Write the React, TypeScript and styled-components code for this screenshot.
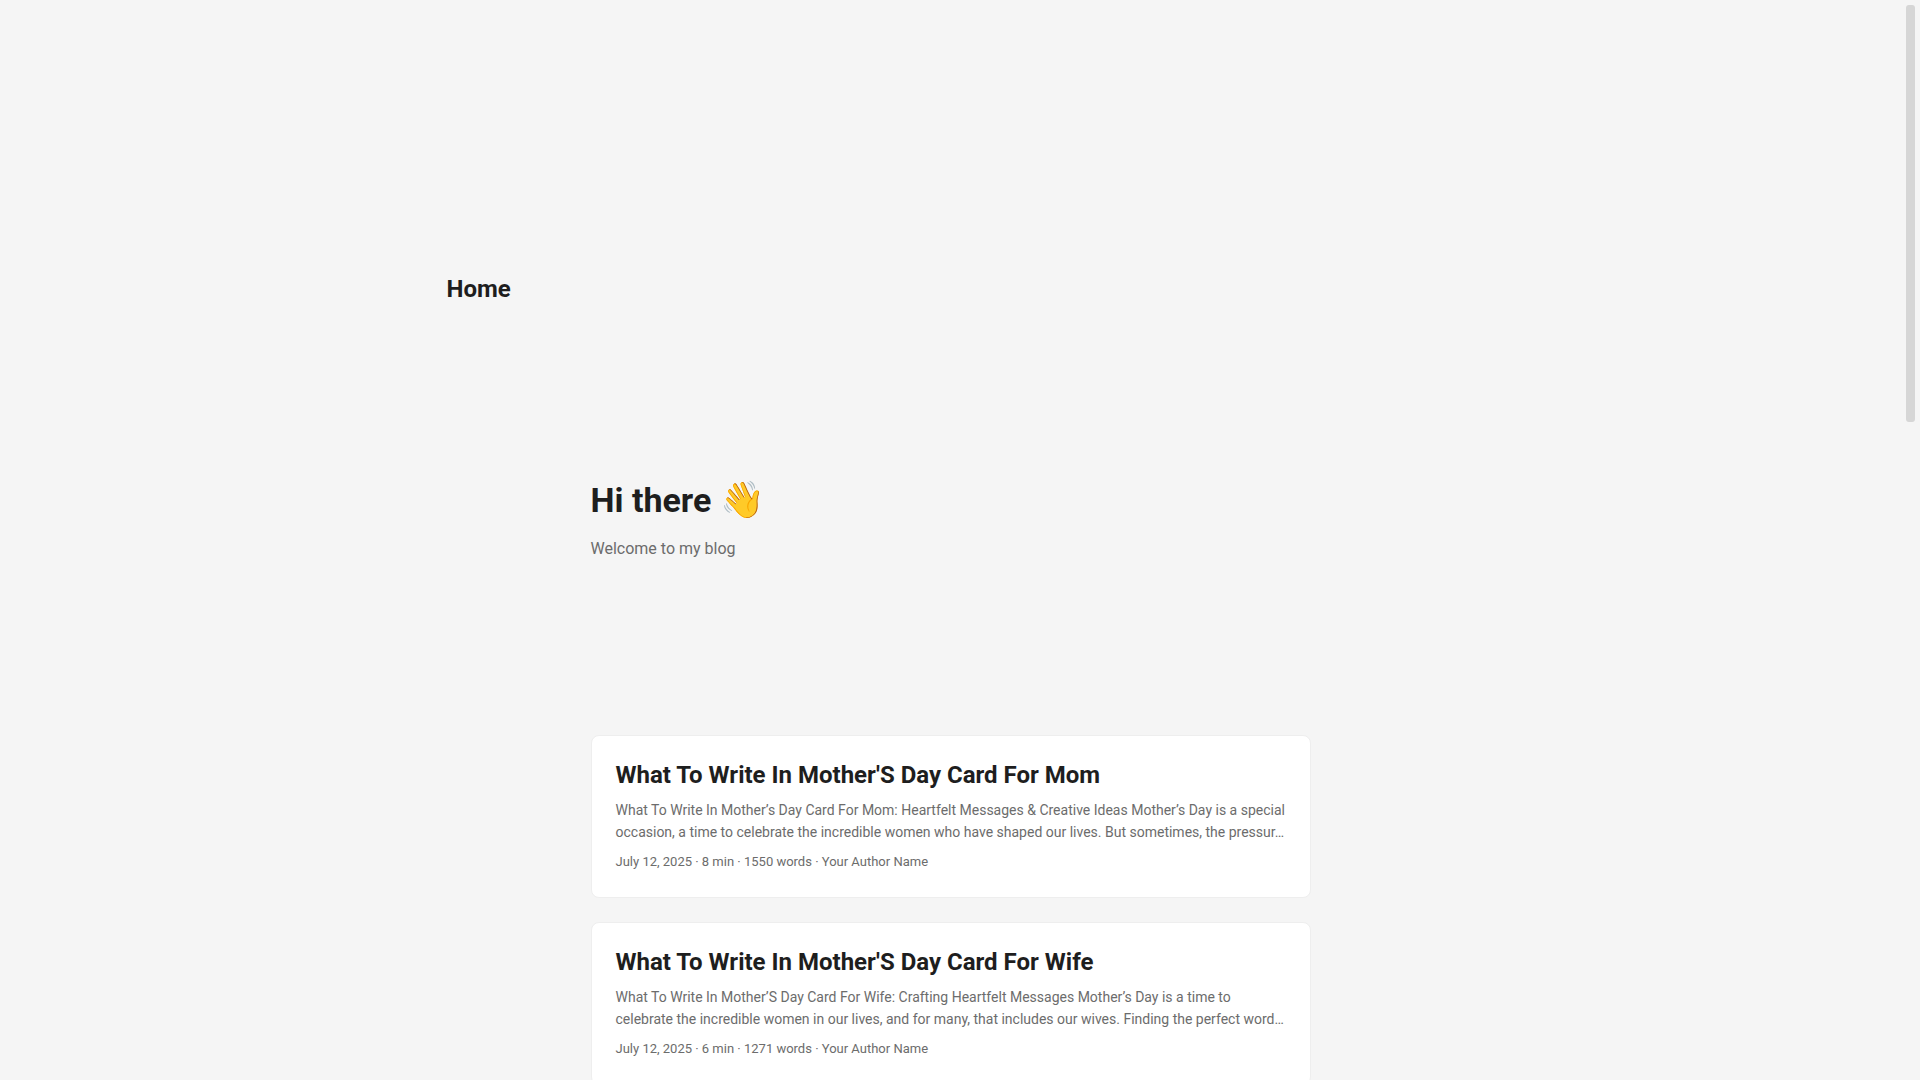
import React from "react";
import styled, { createGlobalStyle } from "styled-components";

const Global = createGlobalStyle`
  * { box-sizing: border-box; margin: 0; padding: 0; }
  body {
    background: #f5f5f5;
    color: #1e1e1e;
    font-family: Roboto, "Open Sans", sans-serif;
    font-size: 18px;
    line-height: 1.6;
    text-rendering: optimizeLegibility;
  }
  a { color: inherit; text-decoration: none; }
`;

const Viewport = styled.div`
  display: flex;
  height: 100vh;
  overflow: hidden;
`;

const Page = styled.div`
  flex: 1;
  min-width: 0;
  overflow-y: auto;
  scrollbar-width: none;
`;

const ScrollRail = styled.div`
  flex: none;
  width: 19px;
  padding: 5px;
`;

const ScrollThumb = styled.div`
  height: 39%;
  background: #d6d6d6;
  border-radius: 3px;
`;

const Header = styled.header`
  max-width: 1056px;
  margin: 0 auto;
  padding: 259px 24px 0;
`;

const Logo = styled.a`
  display: inline-block;
  font-size: 24px;
  font-weight: 700;
  line-height: 60px;
`;

const Main = styled.main`
  max-width: 768px;
  margin: 0 auto;
  padding: 24px;
`;

const Intro = styled.section`
  display: flex;
  flex-direction: column;
  justify-content: center;
  min-height: 320px;
  margin: 24px 0 48px;
`;

const Greeting = styled.h1`
  font-size: 34px;
  line-height: 44px;
`;

const Wave = styled.span`
  font-size: 36px;
  line-height: 1;
`;

const Welcome = styled.p`
  margin: 14px 0;
  font-size: 16px;
  line-height: 26px;
  color: #6c6c6c;
`;

const Post = styled.article`
  margin-bottom: 24px;
  padding: 24px 24px 25px;
  background: #fff;
  border: 1px solid #eee;
  border-radius: 8px;
`;

const Title = styled.h2`
  font-size: 24px;
  line-height: 31px;
`;

const Summary = styled.p`
  margin: 8px 0;
  font-size: 14px;
  line-height: 22px;
  color: #6c6c6c;
`;

const Meta = styled.footer`
  font-size: 13px;
  line-height: 21px;
  color: #6c6c6c;
`;

const posts = [
  {
    title: "What To Write In Mother'S Day Card For Mom",
    summary:
      "What To Write In Mother’s Day Card For Mom: Heartfelt Messages & Creative Ideas Mother’s Day is a special occasion, a time to celebrate the incredible women who have shaped our lives. But sometimes, the pressur…",
    meta: "July 12, 2025 · 8 min · 1550 words · Your Author Name",
  },
  {
    title: "What To Write In Mother'S Day Card For Wife",
    summary:
      "What To Write In Mother’S Day Card For Wife: Crafting Heartfelt Messages Mother’s Day is a time to celebrate the incredible women in our lives, and for many, that includes our wives. Finding the perfect word…",
    meta: "July 12, 2025 · 6 min · 1271 words · Your Author Name",
  },
];

export default function App() {
  return (
    <Viewport>
      <Global />
      <Page>
        <Header>
          <Logo href="#">Home</Logo>
        </Header>
        <Main>
          <Intro>
            <Greeting>
              Hi there <Wave>👋</Wave>
            </Greeting>
            <Welcome>Welcome to my blog</Welcome>
          </Intro>
          {posts.map((post) => (
            <Post key={post.title}>
              <Title>
                <a href="#">{post.title}</a>
              </Title>
              <Summary>{post.summary}</Summary>
              <Meta>{post.meta}</Meta>
            </Post>
          ))}
        </Main>
      </Page>
      <ScrollRail aria-hidden="true">
        <ScrollThumb />
      </ScrollRail>
    </Viewport>
  );
}
